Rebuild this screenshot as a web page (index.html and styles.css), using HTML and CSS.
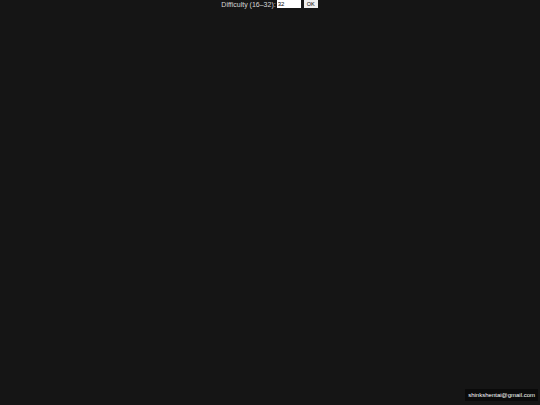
FILE: index.html
```html
<!DOCTYPE html>
<html>
<head>
<meta charset="utf-8">
<link rel="stylesheet" href="styles.css">
</head>
<body>
<div class="topbar">
  <label class="label">Difficulty (16–32):</label>
  <input class="num" type="text" value="32">
  <button class="ok">OK</button>
</div>
<div class="email">shinkshentai@gmail.com</div>
</body>
</html>
```
FILE: styles.css
```css
html, body {
  margin: 0;
  padding: 0;
  width: 540px;
  height: 405px;
  background: #151515;
  overflow: hidden;
  font-family: "Liberation Sans", Arial, sans-serif;
}
body { position: relative; }
.topbar {
  display: flex;
  justify-content: center;
  align-items: center;
  height: 9px;
  padding-right: 1px;
}
.label {
  color: #d8d8d8;
  font-size: 7px;
  line-height: 9px;
  margin-right: 1px;
}
.num {
  width: 24px;
  height: 8px;
  box-sizing: border-box;
  border: none;
  background: #ffffff;
  color: #000;
  font-family: "Liberation Sans", Arial, sans-serif;
  font-size: 6px;
  padding: 0 1px;
  margin: 0 3px 1px 0;
  outline: none;
}
.ok {
  width: 14px;
  height: 8px;
  box-sizing: border-box;
  border: none;
  background: #efefef;
  color: #000;
  font-family: "Liberation Sans", Arial, sans-serif;
  font-size: 5.5px;
  padding: 0;
  margin: 0 0 1px 0;
  line-height: 8px;
}
.email {
  position: absolute;
  right: 2px;
  bottom: 4px;
  background: #0a0a0a;
  color: #ffffff;
  font-size: 6px;
  line-height: 12px;
  padding: 0 3px;
}
```
